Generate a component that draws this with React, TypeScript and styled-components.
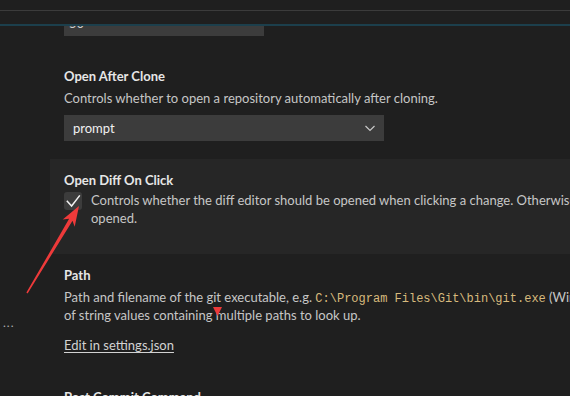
import React from 'react'
import styled, { createGlobalStyle } from 'styled-components'

const GlobalStyle = createGlobalStyle`
    html, body {
        margin: 0;
        padding: 0;
        background: #1f1f1f;
        overflow: hidden;
    }
    * {
        box-sizing: border-box;
    }
`

const Page = styled.div`
    position: relative;
    width: 570px;
    height: 396px;
    display: flex;
    flex-direction: column;
    overflow: hidden;
    background: #1f1f1f;
    font-family: 'Segoe UI', Lato, 'Liberation Sans', sans-serif;
    font-size: 13px;
    line-height: 18px;
    color: #c6c6c6;
`

const Header = styled.div`
    flex: none;
    display: flex;
    flex-direction: column;
    background: #1f1f1f;
`

const SearchEdge = styled.div`
    height: 11px;
    border-bottom: 1px solid #3b3b3b;
`

const TabStrip = styled.div`
    height: 15px;
    border-bottom: 2px solid #1c3f4c;
`

const Body = styled.div`
    flex: 1;
    min-height: 0;
    display: flex;
    overflow: hidden;
`

const TocPane = styled.div`
    flex: none;
    width: 50px;
    padding: 288px 0 0 3px;
    color: #b0b0b0;
    font-size: 12px;
    letter-spacing: 1px;
`

const SettingsList = styled.div`
    flex: 1;
    min-width: 0;
    margin-top: -28px;
    display: flex;
    flex-direction: column;
`

const SettingItem = styled.div<{ $focused?: boolean; $bottom?: number }>`
    padding: 12px 14px ${({ $bottom }) => $bottom ?? 18}px;
    background: ${({ $focused }) => ($focused ? '#262626' : 'transparent')};
`

const Title = styled.div`
    font-weight: 700;
    color: #e6e6e6;
    white-space: nowrap;
`

const Description = styled.div`
    margin-top: 4px;
    white-space: nowrap;
    color: #c6c6c6;
`

const Code = styled.code`
    font-family: Consolas, 'Liberation Mono', monospace;
    font-size: 12px;
    line-height: 1;
    color: #d7ba7d;
`

const NumberInput = styled.div`
    width: 200px;
    height: 26px;
    padding: 0 5px;
    background: #3c3c3c;
    color: #cccccc;
    display: flex;
    align-items: center;
`

const Select = styled.div`
    margin-top: 8px;
    width: 320px;
    height: 26px;
    padding: 0 6px 0 9px;
    background: #3c3c3c;
    color: #f0f0f0;
    display: flex;
    align-items: center;
    justify-content: space-between;
`

const CheckRow = styled.div`
    margin-top: 2px;
    display: flex;
    align-items: flex-start;
    gap: 9px;
`

const CheckBox = styled.div`
    flex: none;
    margin-top: 1px;
    width: 18px;
    height: 18px;
    border-radius: 3px;
    background: #3c3c3c;
    display: flex;
`

const CheckText = styled.div`
    white-space: nowrap;
    color: #c6c6c6;
`

const EditLink = styled.a`
    display: inline-block;
    margin-top: 12px;
    color: #d2d2d2;
    text-decoration: underline;
    text-underline-offset: 2px;
`

const Annotation = styled.svg`
    position: absolute;
    left: 0;
    top: 0;
    pointer-events: none;
`

const ChevronDown = () => (
    <svg width="16" height="16" viewBox="0 0 16 16">
        <path d="M3.5 6 L8 10.5 L12.5 6" fill="none" stroke="#c8c8c8" strokeWidth="1.2" />
    </svg>
)

const CheckMark = () => (
    <svg width="18" height="18" viewBox="0 0 18 18">
        <path d="M2.8 8.8 L7.6 14 L15.8 3.4" fill="none" stroke="#f2f2f2" strokeWidth="1.5" />
    </svg>
)

export default function App() {
    return (
        <Page>
            <GlobalStyle />
            <Header>
                <SearchEdge />
                <TabStrip />
            </Header>
            <Body>
                <TocPane>...</TocPane>
                <SettingsList>
                    <SettingItem $bottom={19}>
                        <NumberInput>50</NumberInput>
                    </SettingItem>

                    <SettingItem>
                        <Title>Open After Clone</Title>
                        <Description>Controls whether to open a repository automatically after cloning.</Description>
                        <Select>
                            <span>prompt</span>
                            <ChevronDown />
                        </Select>
                    </SettingItem>

                    <SettingItem $focused $bottom={27}>
                        <Title>Open Diff On Click</Title>
                        <CheckRow>
                            <CheckBox>
                                <CheckMark />
                            </CheckBox>
                            <CheckText>
                                Controls whether the diff editor should be opened when clicking a change. Otherwise the default editor will be
                                <br />
                                opened.
                            </CheckText>
                        </CheckRow>
                    </SettingItem>

                    <SettingItem $bottom={22}>
                        <Title>Path</Title>
                        <Description>
                            Path and filename of the git executable, e.g. <Code>C:\Program Files\Git\bin\git.exe</Code> (Windows). This can also be an array
                            <br />
                            of string values containing multiple paths to look up.
                        </Description>
                        <EditLink>Edit in settings.json</EditLink>
                    </SettingItem>

                    <SettingItem>
                        <Title>Post Commit Command</Title>
                    </SettingItem>
                </SettingsList>
            </Body>

            {/* red annotation drawn over the screenshot */}
            <Annotation width="570" height="396" viewBox="0 0 570 396">
                <polygon
                    points="79,206 62.7,219.6 69.1,218.8 26.4,292.6 27.6,293.4 72.5,220.8 74.7,226.8"
                    fill="#ee3a3a"
                />
                <polygon points="213,307 222,307 217.5,316" fill="#ee3a3a" />
            </Annotation>
        </Page>
    )
}
